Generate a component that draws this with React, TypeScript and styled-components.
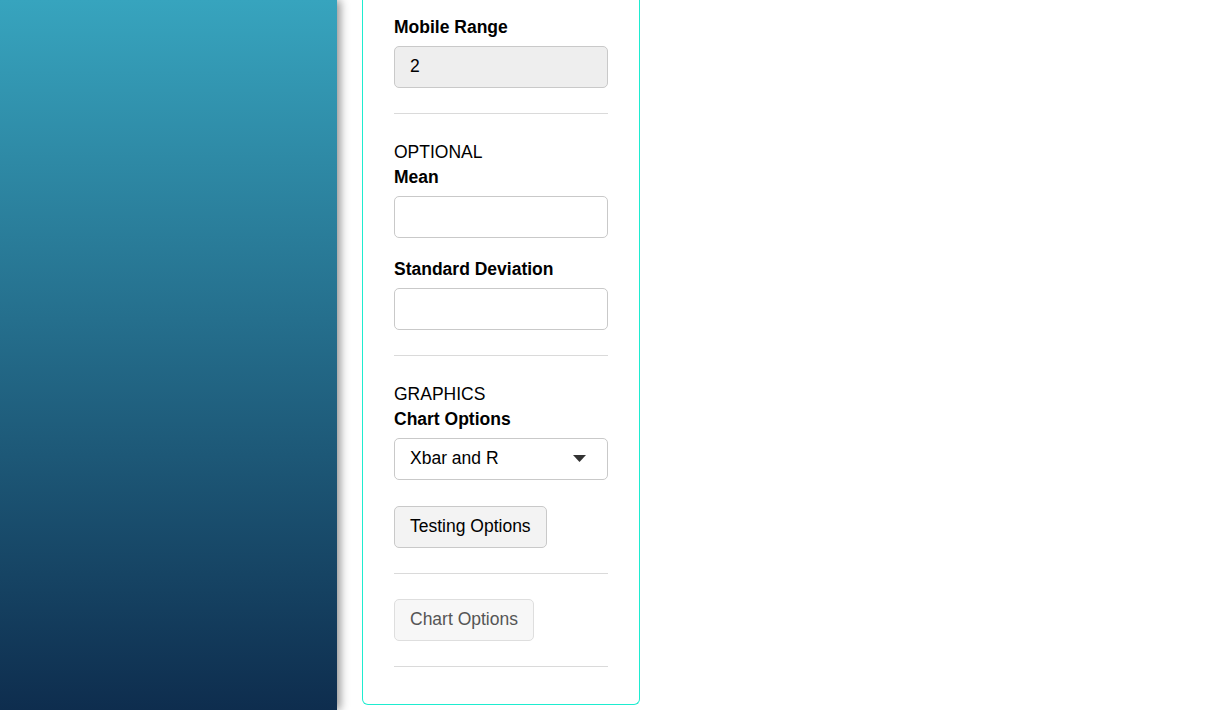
import React from 'react';
import styled, { createGlobalStyle } from 'styled-components';

const GlobalStyle = createGlobalStyle`
  html, body {
    margin: 0;
    padding: 0;
    background: #ffffff;
    font-family: 'Liberation Sans', Arial, sans-serif;
    color: #000;
  }
`;

const Layout = styled.div`
  display: flex;
  height: 710px;
  overflow: hidden;
`;

const Sidebar = styled.aside`
  width: 337px;
  flex-shrink: 0;
  background: linear-gradient(to bottom, #37a4be 0%, #256f8d 45%, #0e2d4e 100%);
  box-shadow: 3px 0 9px rgba(0, 0, 0, 0.45);
  position: relative;
  z-index: 1;
`;

const Main = styled.main`
  flex: 1;
  padding-left: 25px;
`;

const Panel = styled.section`
  box-sizing: border-box;
  width: 278px;
  padding: 14px 31px 12px;
  border: 1px solid #1eecd0;
  border-top: none;
  border-radius: 0 0 6px 6px;
  display: flex;
  flex-direction: column;
`;

const Field = styled.div<{ $gap?: number }>`
  display: flex;
  flex-direction: column;
  margin-top: ${(p) => p.$gap ?? 0}px;
`;

const Caption = styled.div`
  font-size: 17.5px;
  line-height: 24px;
  padding-top: 1px;
`;

const Label = styled.label`
  font-size: 17.5px;
  line-height: 25px;
  padding-top: 1px;
  font-weight: 700;
  margin-bottom: 6px;
`;

const Input = styled.input`
  box-sizing: border-box;
  height: 42px;
  width: 100%;
  padding: 0 15px 2px;
  border: 1px solid #c9c9c9;
  border-radius: 5px;
  font-family: inherit;
  font-size: 17.5px;
  color: #000;
  background: ${(p) => (p.readOnly ? '#eeeeee' : '#ffffff')};
  outline: none;
`;

const SelectBox = styled.div`
  box-sizing: border-box;
  height: 42px;
  display: flex;
  align-items: center;
  justify-content: space-between;
  padding: 0 21px 2px 15px;
  border: 1px solid #c9c9c9;
  border-radius: 5px;
  font-size: 17.5px;
  background: #fff;
`;

const Divider = styled.hr`
  border: none;
  border-top: 1px solid #dadada;
  margin: 25px 0;
  width: 100%;
`;

const Button = styled.button<{ $top?: number }>`
  align-self: flex-start;
  box-sizing: border-box;
  height: 42px;
  margin-top: ${(p) => p.$top ?? 0}px;
  padding: 0 15px 2px;
  font-family: inherit;
  font-size: 17.5px;
  color: #000;
  background: #f3f3f3;
  border: 1px solid #c9c9c9;
  border-radius: 5px;

  &:disabled {
    color: #555;
    background: #f7f7f7;
    border-color: #dedede;
  }
`;

const Caret = () => (
  <svg width="13" height="7" viewBox="0 0 13 7">
    <path d="M0 0 H13 L6.5 7 Z" fill="#333" />
  </svg>
);

export default function App() {
  return (
    <>
      <GlobalStyle />
      <Layout>
        <Sidebar />
        <Main>
          <Panel>
            <Field>
              <Label>Mobile Range</Label>
              <Input readOnly value="2" />
            </Field>
            <Divider />
            <Caption>OPTIONAL</Caption>
            <Field>
              <Label>Mean</Label>
              <Input />
            </Field>
            <Field $gap={18}>
              <Label>Standard Deviation</Label>
              <Input />
            </Field>
            <Divider />
            <Caption>GRAPHICS</Caption>
            <Field>
              <Label>Chart Options</Label>
              <SelectBox>
                <span>Xbar and R</span>
                <Caret />
              </SelectBox>
            </Field>
            <Button $top={26}>Testing Options</Button>
            <Divider />
            <Button disabled>Chart Options</Button>
            <Divider />
          </Panel>
        </Main>
      </Layout>
    </>
  );
}
